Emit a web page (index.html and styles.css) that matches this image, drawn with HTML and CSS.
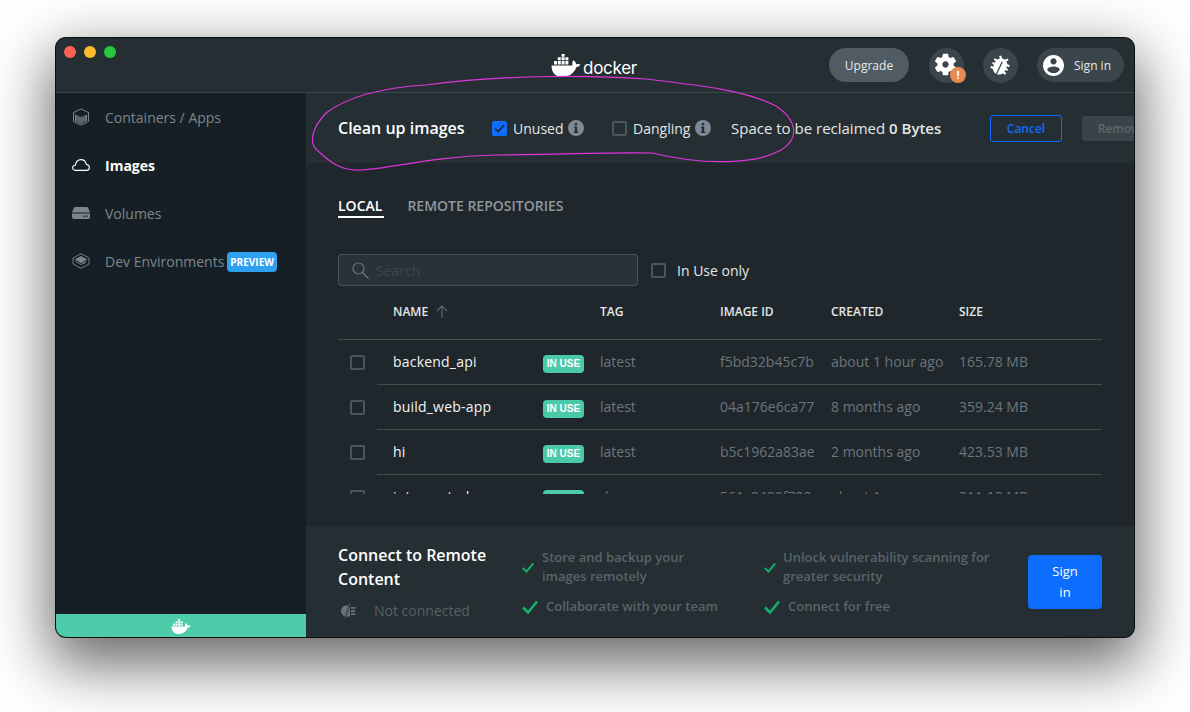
FILE: index.html
```html
<!DOCTYPE html>
<html lang="en">
<head>
    <meta charset="UTF-8">
    <meta name="viewport" content="width=device-width, initial-scale=1.0">
    <title>Docker Desktop - Images</title>
    <link rel="stylesheet" href="styles.css">
</head>
<body>

    <div class="window">
        <header class="topbar">
            <div class="lights">
                <span class="light light-red"></span>
                <span class="light light-yellow"></span>
                <span class="light light-green"></span>
            </div>
            <div class="logo">
                <svg class="whale" viewBox="0 0 30 23">
                    <use href="#whale"></use>
                </svg>
                <span class="logo-text">docker</span>
            </div>
            <div class="actions">
                <button class="pill upgrade" type="button">Upgrade</button>
                <button class="round" type="button">
                    <svg class="gear" viewBox="0 0 24 24"><path d="M19.14 12.94c.04-.3.06-.61.06-.94 0-.32-.02-.64-.07-.94l2.03-1.58c.18-.14.23-.41.12-.61l-1.92-3.32c-.12-.22-.37-.29-.59-.22l-2.39.96c-.5-.38-1.03-.7-1.62-.94l-.36-2.54c-.04-.24-.24-.41-.48-.41h-3.84c-.24 0-.43.17-.47.41l-.36 2.54c-.59.24-1.13.57-1.62.94l-2.39-.96c-.22-.08-.47 0-.59.22L2.74 8.87c-.12.21-.08.47.12.61l2.03 1.58c-.05.3-.09.63-.09.94s.02.64.07.94l-2.03 1.58c-.18.14-.23.41-.12.61l1.92 3.32c.12.22.37.29.59.22l2.39-.96c.5.38 1.03.7 1.62.94l.36 2.54c.05.24.24.41.48.41h3.84c.24 0 .44-.17.47-.41l.36-2.54c.59-.24 1.13-.56 1.62-.94l2.39.96c.22.08.47 0 .59-.22l1.92-3.32c.12-.22.07-.47-.12-.61l-2.01-1.58zM12 14.800c-1.540 0-2.800-1.260-2.800-2.800s1.260-2.800 2.800-2.800 2.800 1.260 2.800 2.800-1.260 2.800-2.800 2.800z"/></svg>
                    <span class="alert">!</span>
                </button>
                <button class="round" type="button">
                    <svg class="bug" viewBox="0 0 24 24"><path d="M20 8h-2.81c-.45-.78-1.07-1.45-1.82-1.96L17 4.41 15.59 3l-2.17 2.17C12.96 5.06 12.49 5 12 5c-.49 0-.96.06-1.41.17L8.41 3 7 4.41l1.62 1.63C7.88 6.55 7.26 7.22 6.81 8H4v2h2.09c-.05.33-.09.66-.09 1v1H4v2h2v1c0 .34.04.67.09 1H4v2h2.81c1.04 1.79 2.97 3 5.19 3s4.15-1.21 5.19-3H20v-2h-2.09c.05-.33.09-.66.09-1v-1h2v-2h-2v-1c0-.34-.04-.67-.09-1H20V8z"/><rect class="bug-line" x="11.4" y="8" width="1.2" height="13"/></svg>
                </button>
                <button class="pill signin-pill" type="button">
                    <svg class="avatar" viewBox="2 2 20 20"><path d="M12 2C6.48 2 2 6.48 2 12s4.48 10 10 10 10-4.48 10-10S17.52 2 12 2zm0 3c1.66 0 3 1.34 3 3s-1.34 3-3 3-3-1.34-3-3 1.34-3 3-3zm0 14.2c-2.5 0-4.71-1.28-6-3.22.03-1.99 4-3.08 6-3.08 1.99 0 5.97 1.09 6 3.08-1.29 1.94-3.5 3.22-6 3.22z"/></svg>
                    Sign in
                </button>
            </div>
        </header>

        <div class="content">
            <aside class="sidebar">
                <nav class="nav">
                    <a class="nav-item">
                        <svg class="nav-icon" viewBox="0 0 18 18" fill="none" stroke="currentColor">
                            <path d="M9 1 16.5 4.5v9L9 17 1.5 13.500v-9z"/>
                            <path d="M3 6.500 9 9l6-2.500v6.500L9 16l-6-3z" fill="currentColor" stroke="none"/>
                            <path d="M5 7v7M7 8v7M9 9v7M11 8v7M13 7v7" stroke="#161f26" stroke-width=".7"/>
                        </svg>
                        Containers / Apps
                    </a>
                    <a class="nav-item nav-active">
                        <svg class="nav-icon" viewBox="0 0 20 14" fill="none" stroke="currentColor" stroke-width="1.200">
                            <path d="M4.500 13C2 13 .7 11.600.7 10.100c0-1.500 1.300-2.800 3-2.900C4.400 3.500 6.800 1 10 1c3.100 0 5.300 2.300 5.900 5.400 2 .2 3.400 1.800 3.400 3.600 0 1.700-1.300 3-3.300 3z"/>
                        </svg>
                        Images
                    </a>
                    <a class="nav-item">
                        <svg class="nav-icon" viewBox="0 0 18 12" fill="currentColor">
                            <path d="M3.500 0h11c1 0 1.500.6 1.900 1.500L18 5.500H0l1.600-4C2 .6 2.500 0 3.500 0z"/>
                            <path d="M0 6.500h18v3.500c0 1.200-.8 2-2 2H2c-1.200 0-2-.8-2-2z"/>
                            <rect x="11.500" y="8.500" width="1.500" height="1.500" fill="#161f26"/>
                            <rect x="14" y="8.500" width="1.500" height="1.500" fill="#161f26"/>
                        </svg>
                        Volumes
                    </a>
                    <a class="nav-item">
                        <svg class="nav-icon" viewBox="0 0 18 16" fill="none" stroke="currentColor" stroke-width=".9">
                            <path d="M9 .7 17 5v6l-8 4.300L1 11V5z"/>
                            <path d="M9 3.500 14.500 6.500 9 9.500 3.500 6.500z" fill="currentColor"/>
                            <path d="M3.500 8.500 9 11.500l5.500-3M5 5.500l8 5" />
                        </svg>
                        Dev Environments
                        <span class="preview">PREVIEW</span>
                    </a>
                </nav>
                <div class="status-bar">
                    <svg class="status-whale" viewBox="0 0 30 23">
                        <use href="#whale"></use>
                    </svg>
                </div>
            </aside>

            <main class="main">
                <section class="cleanup">
                    <h2 class="cleanup-title">Clean up images</h2>
                    <label class="option option-unused">
                        <span class="box box-checked">
                            <svg viewBox="0 0 15 15" fill="none" stroke="#1d2a35" stroke-width="1.700"><path d="M3 7.500 6.200 10.500 12 4.200"/></svg>
                        </span>
                        Unused
                        <svg class="info" viewBox="0 0 16 16"><use href="#info"></use></svg>
                    </label>
                    <label class="option option-dangling">
                        <span class="box"></span>
                        Dangling
                        <svg class="info" viewBox="0 0 16 16"><use href="#info"></use></svg>
                    </label>
                    <p class="reclaim">Space to be reclaimed <strong>0 Bytes</strong></p>
                    <button class="btn-cancel" type="button">Cancel</button>
                    <button class="btn-remove" type="button">Remove</button>
                </section>

                <section class="images">
                    <div class="tabs">
                        <a class="tab tab-active">LOCAL</a>
                        <a class="tab">REMOTE REPOSITORIES</a>
                    </div>

                    <div class="filters">
                        <div class="search">
                            <svg class="search-icon" viewBox="0 0 17 17" fill="none" stroke="currentColor" stroke-width="1.200"><circle cx="6.500" cy="6.500" r="5.500"/><path d="M10.500 10.500 16.500 16.500"/></svg>
                            <input class="search-input" type="text" placeholder="Search">
                        </div>
                        <label class="option option-inuse">
                            <span class="box"></span>
                            In Use only
                        </label>
                    </div>

                    <div class="table-head">
                        <div class="cols">
                            <span></span>
                            <span class="head-name">NAME
                                <svg class="sort" viewBox="0 0 12 13" fill="none" stroke="currentColor" stroke-width="1.300"><path d="M6 13V1M1 6l5-5 5 5"/></svg>
                            </span>
                            <span></span>
                            <span>TAG</span>
                            <span>IMAGE ID</span>
                            <span>CREATED</span>
                            <span>SIZE</span>
                        </div>
                    </div>

                    <div class="rows">
                        <div class="row">
                            <div class="row-check"><span class="box"></span></div>
                            <div class="cols row-body">
                                <span></span>
                                <span class="name">backend_api</span>
                                <span class="badge">IN USE</span>
                                <span>latest</span>
                                <span>f5bd32b45c7b</span>
                                <span>about 1 hour ago</span>
                                <span>165.78 MB</span>
                            </div>
                        </div>
                        <div class="row">
                            <div class="row-check"><span class="box"></span></div>
                            <div class="cols row-body">
                                <span></span>
                                <span class="name">build_web-app</span>
                                <span class="badge">IN USE</span>
                                <span>latest</span>
                                <span>04a176e6ca77</span>
                                <span>8 months ago</span>
                                <span>359.24 MB</span>
                            </div>
                        </div>
                        <div class="row">
                            <div class="row-check"><span class="box"></span></div>
                            <div class="cols row-body">
                                <span></span>
                                <span class="name">hi</span>
                                <span class="badge">IN USE</span>
                                <span>latest</span>
                                <span>b5c1962a83ae</span>
                                <span>2 months ago</span>
                                <span>423.53 MB</span>
                            </div>
                        </div>
                        <div class="row">
                            <div class="row-check"><span class="box"></span></div>
                            <div class="cols row-body">
                                <span></span>
                                <span class="name">interpreted</span>
                                <span class="badge">IN USE</span>
                                <span>dev</span>
                                <span>561c8489f729</span>
                                <span>about 1 year ago</span>
                                <span>311.18 MB</span>
                            </div>
                        </div>
                    </div>
                </section>

                <section class="remote">
                    <div class="remote-info">
                        <h3 class="remote-title">Connect to Remote Content</h3>
                        <p class="remote-status">
                            <svg class="plug" viewBox="0 0 16 16" fill="currentColor">
                                <path d="M10 2.500v11H6.500C3.500 13.500 1 11 1 8s2.500-5.500 5.500-5.500z"/>
                                <path d="M11 4h4.500v1.800H11zM11 10.200h4.500V12H11zM11 7.100h4V8.900h-4z"/>
                                <path d="M10 .5 5 15.500" stroke="#252e33" stroke-width="2"/>
                                <path d="M10 .5 5 15.500" stroke="currentColor" stroke-width=".8"/>
                            </svg>
                            Not connected
                        </p>
                    </div>
                    <ul class="features features-left">
                        <li class="feature">
                            <svg class="check check-small" viewBox="0 0 16 14"><use href="#check"></use></svg>
                            Store and backup your images remotely
                        </li>
                        <li class="feature">
                            <svg class="check" viewBox="0 0 16 14"><use href="#check"></use></svg>
                            Collaborate with your team
                        </li>
                    </ul>
                    <ul class="features features-right">
                        <li class="feature">
                            <svg class="check check-small" viewBox="0 0 16 14"><use href="#check"></use></svg>
                            Unlock vulnerability scanning for greater security
                        </li>
                        <li class="feature">
                            <svg class="check" viewBox="0 0 16 14"><use href="#check"></use></svg>
                            Connect for free
                        </li>
                    </ul>
                    <button class="btn-signin" type="button">Sign in</button>
                </section>
            </main>
        </div>

        <!-- hand drawn annotation on top of the screenshot -->
        <svg class="scribble" viewBox="0 0 1078 599" fill="none" stroke="#df36dc" stroke-width="1.200">
            <path d="M596 115C560 114 520 116 440 117 370 119 340 130 304 132 285 133 274 124 262 113 252 105 256 90 270 75 290 60 320 50 370 47 440 38 520 36 590 41 640 47 690 52 720 68 740 81 745 100 725 112 700 126 650 128 596 115Z"/>
        </svg>
    </div>

    <!-- shared icons -->
    <svg class="defs" aria-hidden="true">
        <defs>
            <g id="whale" fill="currentColor">
                <path d="M.5 11.500H21.500c-.6-1.800-.2-4 .9-5.200 1.600 1 2.600 2.600 2.800 4 1.200-.5 3-.5 4.300.3-.7 1.700-2.200 2.400-4 2.500C23.500 18.500 19 23 11 23 4 23 .5 18 .5 11.500Z"/>
                <path d="M3 7h3v3.500H3zM6.800 7h3v3.500h-3zM10.600 7h3v3.500h-3zM14.400 7h3v3.500h-3zM6.800 3.300h3v3h-3zM10.600 3.300h3v3h-3zM14.400 3.300h3v3h-3zM10.600 0h3v2.700h-3z"/>
            </g>
            <g id="info">
                <circle cx="8" cy="8" r="8" fill="#7c8a95"/>
                <rect x="6.800" y="3" width="2.400" height="2.200" fill="#252e33"/>
                <path d="M6 6.500h3.200v5.200H10.300v1.300H5.800v-1.300h1V7.800H6z" fill="#252e33"/>
            </g>
            <path id="check" d="M1 7.500 6 12.500 15 1.500" fill="none" stroke="#10b368" stroke-width="2.600"/>
        </defs>
    </svg>

</body>
</html>
```

FILE: styles.css
```css
* {
    box-sizing: border-box;
}

body {
    margin: 0;
    padding: 38px 56px;
    height: 712px;
    overflow: hidden;
    background-color: #fff;
    font-family: "Open Sans", sans-serif;
    font-size: 14px;
    color: #fff;
}

button {
    font-family: inherit;
    border: none;
}

h2, h3, p, ul {
    margin: 0;
    padding: 0;
}

.defs {
    position: absolute;
    width: 0;
    height: 0;
}

.window {
    position: relative;
    display: flex;
    flex-direction: column;
    width: 1078px;
    height: 599px;
    border-radius: 10px;
    overflow: hidden;
    background-color: #252e33;
    box-shadow: 0 0 0 1px #0b0d0f, 0 22px 60px 6px rgba(0, 0, 0, 0.6);
}

.topbar {
    display: grid;
    grid-template-columns: 1fr auto 1fr;
    align-items: center;
    height: 55px;
    flex-shrink: 0;
    padding: 0 10px 0 8px;
    background-color: #252e33;
    border-bottom: 1px solid #3c454a;
}

.lights {
    display: flex;
    gap: 8px;
    align-self: start;
    padding-top: 8px;
}

.light {
    width: 12px;
    height: 12px;
    border-radius: 50%;
}

.light-red {
    background-color: #fe5f57;
}

.light-yellow {
    background-color: #febb2e;
}

.light-green {
    background-color: #27c83f;
}

.logo {
    display: flex;
    align-items: center;
    gap: 2px;
    color: #fff;
}

.whale {
    width: 30px;
    height: 23px;
}

.logo-text {
    font-family: "Inter", sans-serif;
    font-size: 17px;
    letter-spacing: -0.3px;
    line-height: 20px;
    margin-top: 5px;
}

.actions {
    display: flex;
    justify-content: flex-end;
    align-items: center;
    gap: 19px;
}

.pill {
    display: flex;
    align-items: center;
    justify-content: center;
    height: 34px;
    border-radius: 17px;
    color: #e6e9ea;
    font-size: 12px;
}

.upgrade {
    width: 80px;
    margin-right: 1px;
    background-color: #505b63;
}

.signin-pill {
    justify-content: flex-start;
    width: 87px;
    gap: 10px;
    padding: 0 0 0 6px;
    background-color: #3a454c;
}

.avatar {
    width: 21px;
    height: 21px;
    fill: #fff;
}

.round {
    position: relative;
    display: flex;
    align-items: center;
    justify-content: center;
    width: 35px;
    height: 35px;
    padding: 0;
    border-radius: 50%;
    background-color: #3a454c;
}

.gear {
    width: 27px;
    height: 27px;
    margin: -2px 2px 0 0;
    fill: #fff;
}

.bug {
    width: 25px;
    height: 25px;
    fill: #fff;
    transform: rotate(25deg);
}

.bug-line {
    fill: #3a454c;
}

.alert {
    position: absolute;
    right: -2px;
    bottom: 0;
    width: 16px;
    height: 16px;
    border-radius: 50%;
    background-color: #e58a52;
    color: #fff;
    font-size: 11px;
    font-weight: 700;
    line-height: 16px;
    text-align: center;
}

.content {
    display: flex;
    flex: 1;
    min-height: 0;
}

.sidebar {
    display: flex;
    flex-direction: column;
    justify-content: space-between;
    width: 250px;
    flex-shrink: 0;
    background-color: #161f26;
}

.nav {
    display: flex;
    flex-direction: column;
}

.nav-item {
    display: flex;
    align-items: center;
    height: 48px;
    padding-left: 16px;
    color: #7d868b;
    white-space: nowrap;
}

.nav-active {
    color: #fff;
    font-weight: 700;
}

.nav-icon {
    width: 18px;
    height: 18px;
    margin-right: 15px;
    flex-shrink: 0;
}

.preview {
    margin: 2px 0 0 3px;
    padding: 0 3px;
    height: 20px;
    border-radius: 4px;
    background-color: #2f9ff0;
    color: #fff;
    font-size: 10px;
    font-weight: 700;
    line-height: 20px;
}

.status-bar {
    display: flex;
    align-items: center;
    justify-content: center;
    height: 23px;
    background-color: #4ecba9;
    color: #fff;
}

.status-whale {
    width: 20px;
    height: 15px;
    margin-top: 1px;
}

.main {
    display: flex;
    flex-direction: column;
    flex: 1;
    min-width: 0;
    background-color: #1f272d;
}

.cleanup {
    display: flex;
    align-items: center;
    height: 70px;
    flex-shrink: 0;
    padding-left: 32px;
    overflow: hidden;
    background-color: #252e33;
    white-space: nowrap;
}

.cleanup-title {
    width: 154px;
    flex-shrink: 0;
    font-size: 16px;
    font-weight: 600;
}

.option {
    display: flex;
    align-items: center;
    flex-shrink: 0;
    color: #e4e7e8;
}

.option .box {
    margin-right: 6px;
}

.option-unused {
    width: 120px;
}

.option-unused .info,
.option-dangling .info {
    margin-left: 5px;
}

.option-dangling {
    width: 119px;
}

.option-inuse .box {
    margin-right: 11px;
}

.box {
    display: block;
    width: 15px;
    height: 15px;
    flex-shrink: 0;
    border: 2px solid #4c555b;
    border-radius: 2px;
}

.box-checked {
    border: none;
    background-color: #0d6efd;
}

.box-checked svg {
    display: block;
}

.info {
    width: 16px;
    height: 16px;
}

.reclaim {
    width: 259px;
    flex-shrink: 0;
    color: #e4e7e8;
    font-size: 15px;
}

.reclaim strong {
    font-weight: 600;
}

.btn-cancel {
    width: 72px;
    height: 27px;
    flex-shrink: 0;
    border: 1px solid #0d6efd;
    border-radius: 3px;
    background: none;
    color: #0d6efd;
    font-size: 12px;
    font-weight: 600;
}

.btn-remove {
    width: 78px;
    height: 25px;
    flex-shrink: 0;
    margin-left: 20px;
    padding: 0;
    border-radius: 3px;
    background-color: #3a4349;
    color: #5f686e;
    font-size: 12px;
    font-weight: 600;
}

.images {
    padding: 33px 32px 0;
}

.tabs {
    display: flex;
    gap: 23px;
}

.tab {
    height: 22px;
    color: #8f989d;
    font-weight: 600;
    line-height: 20px;
}

.tab-active {
    padding-right: 2px;
    color: #fff;
    border-bottom: 2px solid #fff;
}

.filters {
    display: flex;
    align-items: center;
    gap: 13px;
    margin-top: 36px;
}

.search {
    display: flex;
    align-items: center;
    width: 300px;
    height: 32px;
    padding-left: 13px;
    border: 1px solid #4a5257;
    border-radius: 3px;
    background-color: #2a3238;
    color: #6e777c;
}

.search-icon {
    width: 17px;
    height: 17px;
    flex-shrink: 0;
}

.search-input {
    width: 200px;
    margin-left: 5px;
    border: none;
    outline: none;
    background: none;
    font-family: inherit;
    font-size: 14px;
    color: #fff;
}

.search-input::placeholder {
    color: #3d464c;
}

.cols {
    display: grid;
    grid-template-columns: 16px 150px 57px 120px 111px 128px 1fr;
    align-items: center;
}

.table-head {
    height: 54px;
    padding: 17px 0 0 39px;
    border-bottom: 1px solid #454c50;
    font-size: 12px;
    font-weight: 600;
    color: #e4e7e8;
}

.head-name {
    display: flex;
    align-items: center;
    gap: 8px;
}

.sort {
    width: 12px;
    height: 13px;
    color: #5a6369;
}

.rows {
    height: 154px;
    overflow: hidden;
}

.row {
    display: flex;
}

.row-check {
    display: flex;
    align-items: center;
    width: 39px;
    flex-shrink: 0;
    padding: 0 0 0 12px;
}

.row-body {
    flex: 1;
    height: 45px;
    padding-bottom: 2px;
    border-bottom: 1px solid #454c50;
    color: #6c757b;
}

.name {
    color: #f2f4f4;
    font-weight: 500;
    letter-spacing: 0.2px;
}

.badge {
    align-self: start;
    width: 41px;
    height: 18px;
    margin-top: 15px;
    border-radius: 4px;
    background-color: #4acaa8;
    color: #fff;
    font-family: "Liberation Sans", sans-serif;
    font-size: 10px;
    font-weight: 700;
    line-height: 18px;
    text-align: center;
}

.remote {
    display: flex;
    align-items: flex-start;
    height: 111px;
    margin-top: auto;
    padding: 17px 32px 0;
    background-color: #252e33;
}

.remote-info {
    width: 184px;
    flex-shrink: 0;
}

.remote-title {
    width: 160px;
    font-size: 16px;
    font-weight: 600;
    line-height: 24px;
}

.remote-status {
    display: flex;
    align-items: center;
    gap: 18px;
    margin-top: 10px;
    padding-left: 2px;
    color: #566067;
}

.plug {
    width: 16px;
    height: 16px;
    color: #6a747b;
}

.features {
    list-style: none;
    flex-shrink: 0;
    padding-top: 5px;
    font-size: 13px;
    font-weight: 600;
    color: #59636a;
}

.features-left {
    width: 242px;
}

.features-left .feature:first-child {
    width: 175px;
}

.features-right {
    width: 264px;
}

.features-right .feature:first-child {
    width: 240px;
    gap: 7px;
}

.feature {
    display: flex;
    align-items: center;
    gap: 8px;
    line-height: 19px;
}

.feature + .feature {
    margin-top: 11px;
}

.check {
    width: 16px;
    height: 14px;
    flex-shrink: 0;
}

.check-small {
    width: 12px;
    height: 11px;
}

.btn-signin {
    width: 74px;
    height: 54px;
    flex-shrink: 0;
    margin-top: 12px;
    margin-left: auto;
    padding: 0 20px;
    border-radius: 4px;
    background-color: #0d6efd;
    color: #fff;
    font-size: 13px;
    font-weight: 500;
    line-height: 21px;
}

.scribble {
    position: absolute;
    top: 0;
    left: 0;
    width: 1078px;
    height: 599px;
    pointer-events: none;
}
```
